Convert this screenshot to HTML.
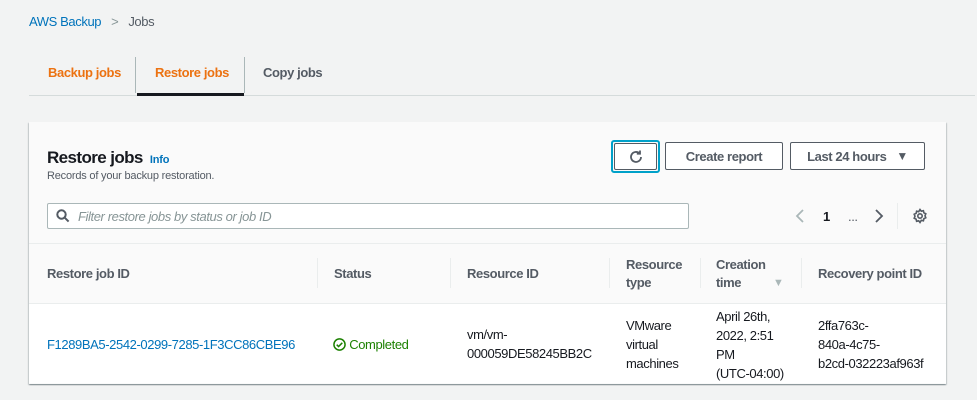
<!DOCTYPE html><html><head><meta charset="utf-8"><style>
*{box-sizing:border-box;margin:0;padding:0}
body{width:977px;height:400px;background:#f2f3f3;font-family:"Liberation Sans",Arial,sans-serif;color:#16191f;position:relative;overflow:hidden;font-size:13px;letter-spacing:-0.4px}
.a{position:absolute}
.btn{position:absolute;border:1px solid #545b64;border-radius:2px;background:#fff;font-weight:bold;color:#545b64;font-size:13px;display:flex;align-items:center;justify-content:center}
.th{position:absolute;font-weight:bold;color:#545b64;font-size:13px;line-height:18px}
.sep{position:absolute;top:258px;height:30px;width:1px;background:#eaeded}
.td{position:absolute;font-size:13px;line-height:19px;color:#16191f}
</style></head><body>
<div class="a" style="left:29px;top:14px;font-size:13px;line-height:16px"><span style="color:#0073bb">AWS Backup</span><span style="color:#879596;margin:0 10px">&gt;</span><span style="color:#545b64">Jobs</span></div>
<div class="a" style="left:48px;top:65px;font-weight:bold;color:#ec7211">Backup jobs</div>
<div class="a" style="left:135px;top:57px;width:1px;height:36px;background:#aab7b8"></div>
<div class="a" style="left:155px;top:65px;font-weight:bold;color:#ec7211">Restore jobs</div>
<div class="a" style="left:244px;top:57px;width:1px;height:36px;background:#aab7b8"></div>
<div class="a" style="left:263px;top:65px;font-weight:bold;color:#545b64">Copy jobs</div>
<div class="a" style="left:29px;top:95px;width:946px;height:1px;background:#d5dbdb"></div>
<div class="a" style="left:137px;top:93px;width:107px;height:3px;background:#16191f"></div>

<div class="a" style="left:29px;top:122px;width:917px;height:262px;background:#fafafa;box-shadow:0 1px 1px rgba(0,28,36,.3),1px 1px 1px rgba(0,28,36,.15),-1px 1px 1px rgba(0,28,36,.15)"></div>
<div class="a" style="left:29px;top:303px;width:917px;height:80px;background:#fff;border-top:1px solid #eaeded"></div>
<div class="a" style="left:29px;top:243px;width:917px;height:1px;background:#eaeded"></div>

<div class="a" style="left:47px;top:148px;font-size:17px;font-weight:bold;line-height:20px;letter-spacing:-0.6px">Restore jobs <span style="font-size:11px;color:#0073bb;margin-left:3px;letter-spacing:-0.2px">Info</span></div>
<div class="a" style="left:47px;top:170px;font-size:11px;color:#545b64;letter-spacing:-0.2px">Records of your backup restoration.</div>

<div class="a" style="left:611px;top:140px;width:49px;height:33px;border:2px solid #00a1c9;border-radius:3px"></div>
<div class="btn" style="left:614px;top:143px;width:43px;height:27px"><svg width="16" height="16" viewBox="0 0 16 16" fill="none" stroke="#545b64" stroke-width="1.8"><path d="M13 8a5 5 0 1 1-1.5-3.6"/><path d="M12 1.5v3.2H8.8"/></svg></div>
<div class="btn" style="left:665px;top:142px;width:118px;height:28px">Create report</div>
<div class="btn" style="left:790px;top:142px;width:135px;height:28px">Last 24 hours <span style="font-size:12px;margin-left:10px">▼</span></div>

<div class="a" style="left:47px;top:203px;width:642px;height:26px;background:#fff;border:1px solid #aab7b8;border-radius:2px"></div>
<svg class="a" style="left:56px;top:209px" width="14" height="14" viewBox="0 0 14 14" fill="none" stroke="#545b64" stroke-width="2"><circle cx="5.5" cy="5.5" r="4.2"/><path d="M8.6 8.6l4 4"/></svg>
<div class="a" style="left:78px;top:209px;font-style:italic;color:#879596;font-size:13px">Filter restore jobs by status or job ID</div>

<svg class="a" style="left:795px;top:209px" width="10" height="14" viewBox="0 0 10 14" fill="none" stroke="#aab7b8" stroke-width="1.8"><path d="M8 1L2 7l6 6"/></svg>
<div class="a" style="left:823px;top:209px;font-weight:bold">1</div>
<div class="a" style="left:848px;top:209px;color:#545b64">...</div>
<svg class="a" style="left:874px;top:209px" width="10" height="14" viewBox="0 0 10 14" fill="none" stroke="#545b64" stroke-width="1.8"><path d="M2 1l6 6-6 6"/></svg>
<div class="a" style="left:897px;top:203px;width:1px;height:26px;background:#eaeded"></div>
<svg class="a" style="left:912px;top:208px" width="16" height="16" viewBox="0 0 16 16" fill="none" stroke="#545b64" stroke-width="1.6"><circle cx="8" cy="8" r="2.2"/><path d="M8 1.5l1.3 1.7 2.1-.5.5 2.1 1.9 1L13 7.8l.8 1.9-1.9 1-.5 2.1-2.1-.5L8 14.5l-1.3-1.7-2.1.5-.5-2.1-1.9-1L3 8.2 2.2 6.3l1.9-1 .5-2.1 2.1.5z"/></svg>

<div class="th" style="left:47px;top:265px">Restore job ID</div>
<div class="sep" style="left:317px"></div>
<div class="th" style="left:334px;top:265px">Status</div>
<div class="sep" style="left:450px"></div>
<div class="th" style="left:467px;top:265px">Resource ID</div>
<div class="sep" style="left:609px"></div>
<div class="th" style="left:626px;top:256px">Resource<br>type</div>
<div class="sep" style="left:700px"></div>
<div class="th" style="left:716px;top:256px">Creation<br>time</div>
<div class="a" style="left:773px;top:277px;font-size:11px;color:#aab7b8">▼</div>
<div class="sep" style="left:801px"></div>
<div class="th" style="left:818px;top:265px">Recovery point ID</div>

<div class="td" style="left:47px;top:335px;color:#0073bb">F1289BA5-2542-0299-7285-1F3CC86CBE96</div>
<div class="td" style="left:333px;top:335px;color:#1d8102"><svg width="13" height="13" viewBox="0 0 14 14" fill="none" stroke="#1d8102" stroke-width="1.6" style="vertical-align:-2px"><circle cx="7" cy="7" r="6"/><path d="M4 7.2l2 2 4-4"/></svg> Completed</div>
<div class="td" style="left:467px;top:325px">vm/vm-<br>000059DE58245BB2C</div>
<div class="td" style="left:626px;top:316px">VMware<br>virtual<br>machines</div>
<div class="td" style="left:716px;top:307px">April 26th,<br>2022, 2:51<br>PM<br>(UTC-04:00)</div>
<div class="td" style="left:818px;top:316px">2ffa763c-<br>840a-4c75-<br>b2cd-032223af963f</div>
</body></html>
